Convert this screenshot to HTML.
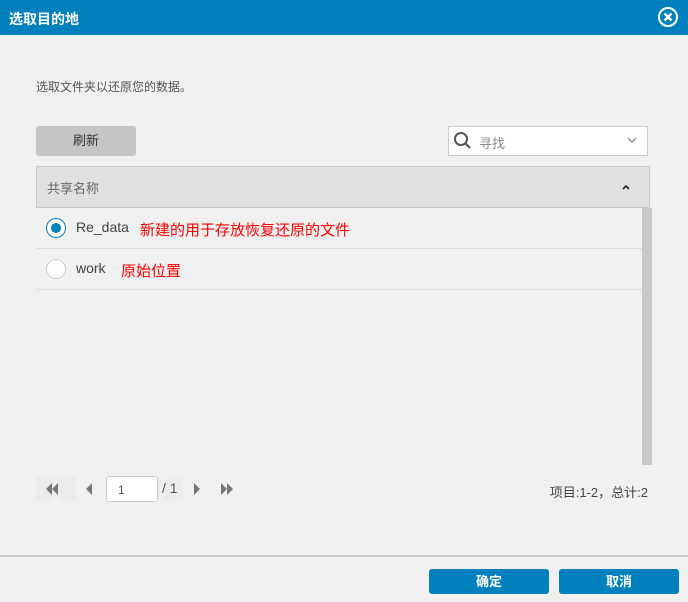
<!DOCTYPE html>
<html><head><meta charset="utf-8"><style>
*{margin:0;padding:0;box-sizing:border-box}
body{width:688px;height:602px;background:#f0f0f0;font-family:"Liberation Sans","Noto Sans CJK SC",sans-serif;position:relative;overflow:hidden}
.a{position:absolute}
</style></head><body>
<div class="a" style="left:0;top:0;width:688px;height:35px;background:#0080bd"></div>
<div class="a" style="left:9px;top:9px;color:#fff;font-size:14px;font-weight:bold">选取目的地</div>
<svg class="a" style="left:657px;top:6px" width="22" height="22" viewBox="0 0 22 22"><circle cx="11" cy="11" r="9" fill="none" stroke="#fff" stroke-width="2"/><path d="M7.5 7.5L14.5 14.5M14.5 7.5L7.5 14.5" stroke="#fff" stroke-width="2.5"/></svg>
<div class="a" style="left:36px;top:78px;font-size:12px;color:#555">选取文件夹以还原您的数据。</div>
<div class="a" style="left:36px;top:126px;width:100px;height:30px;background:#c4c4c4;border-radius:3px;font-size:13px;color:#333;text-align:center;line-height:30px">刷新</div>
<div class="a" style="left:448px;top:126px;width:200px;height:30px;background:#fff;border:1px solid #ccc"></div>
<svg class="a" style="left:453px;top:131px" width="20" height="20" viewBox="0 0 20 20"><circle cx="8" cy="8" r="6" fill="none" stroke="#555" stroke-width="2"/><path d="M12.5 12.5L17 17" stroke="#555" stroke-width="2.2"/></svg>
<div class="a" style="left:479px;top:133px;font-size:13px;color:#888">寻找</div>
<svg class="a" style="left:627px;top:136px" width="10" height="8"><path d="M1 2L5 6L9 2" stroke="#777" fill="none"/></svg>
<div class="a" style="left:36px;top:166px;width:614px;height:42px;background:#e0e0e0;border:1px solid #c8c8c8"></div>
<div class="a" style="left:47px;top:178px;font-size:13px;color:#666">共享名称</div>
<svg class="a" style="left:621px;top:183px" width="10" height="8"><path d="M2 6L5 3L8 6" stroke="#222" stroke-width="1.6" fill="none"/></svg>
<div class="a" style="left:642px;top:208px;width:10px;height:257px;background:#c8c8c8"></div>
<div class="a" style="left:36px;top:248px;width:606px;height:1px;background:#ddd"></div>
<div class="a" style="left:36px;top:289px;width:606px;height:1px;background:#ddd"></div>
<div class="a" style="left:46px;top:218px;width:20px;height:20px;border-radius:50%;background:#fff;border:1px solid #0080bd"></div>
<div class="a" style="left:51px;top:223px;width:10px;height:10px;border-radius:50%;background:#0080bd"></div>
<div class="a" style="left:76px;top:219px;font-size:14px;color:#444">Re_data</div>
<div class="a" style="left:140px;top:219px;font-size:15px;color:#f00">新建的用于存放恢复还原的文件</div>
<div class="a" style="left:46px;top:259px;width:20px;height:20px;border-radius:50%;background:#fff;border:1px solid #ccc"></div>
<div class="a" style="left:76px;top:260px;font-size:14px;color:#444">work</div>
<div class="a" style="left:121px;top:260px;font-size:15px;color:#f00">原始位置</div>
<div class="a" style="left:36px;top:477px;width:18px;height:24px;background:#ebebeb;border-radius:3px"></div>
<div class="a" style="left:58px;top:477px;width:18px;height:24px;background:#ebebeb;border-radius:3px"></div>
<div class="a" style="left:142px;top:477px;width:18px;height:24px;background:#ebebeb;border-radius:3px"></div>
<div class="a" style="left:165px;top:477px;width:18px;height:24px;background:#ebebeb;border-radius:3px"></div>
<svg class="a" style="left:0;top:0" width="688" height="602"><g fill="#777"><path d="M46 489L52 483V495Z M52 489L58 483V495Z M92 483V495L86 489Z M194 483V495L200 489Z M221 483L227 489L221 495Z M227 483L233 489L227 495Z"/></g></svg>
<div class="a" style="left:106px;top:476px;width:52px;height:26px;background:#fff;border:1px solid #ccc;border-radius:3px;font-size:12px;color:#555;padding-left:11px;line-height:26px">1</div>
<div class="a" style="left:162px;top:480px;font-size:14px;color:#555">/ 1</div>
<div class="a" style="right:40px;top:482px;font-size:13px;color:#444;white-space:nowrap">项目:1-2，总计:2</div>
<div class="a" style="left:0;top:555px;width:688px;height:2px;background:#ccc"></div>
<div class="a" style="left:429px;top:569px;width:120px;height:25px;background:#0080bd;border-radius:3px;color:#fff;font-size:13px;font-weight:bold;text-align:center;line-height:25px">确定</div>
<div class="a" style="left:559px;top:569px;width:120px;height:25px;background:#0080bd;border-radius:3px;color:#fff;font-size:13px;font-weight:bold;text-align:center;line-height:25px">取消</div>
</body></html>
